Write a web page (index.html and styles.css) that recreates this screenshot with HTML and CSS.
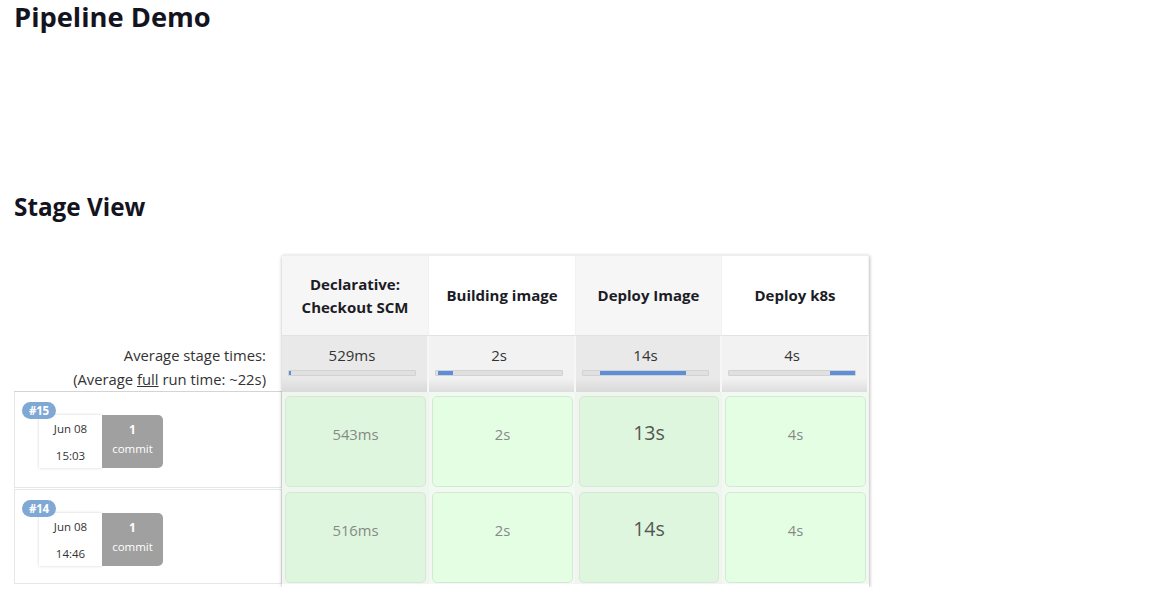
FILE: index.html
```html
<!DOCTYPE html>
<html lang="en">
<head>
<meta charset="utf-8">
<title>Pipeline Demo</title>
<link rel="stylesheet" href="styles.css">
</head>
<body>
<h1 class="title">Pipeline Demo</h1>
<h2 class="subtitle">Stage View</h2>
<div class="stage-view">
  <div class="left">
    <div class="left-head"></div>
    <div class="left-avg">
      <div>Average stage times:</div>
      <div>(Average <u>full</u> run time: ~22s)</div>
    </div>
    <div class="run">
      <span class="badge">#15</span>
      <div class="run-box">
        <div class="date"><span>Jun 08</span><span>15:03</span></div>
        <div class="commits"><b>1</b><span>commit</span></div>
      </div>
    </div>
    <div class="run">
      <span class="badge">#14</span>
      <div class="run-box">
        <div class="date"><span>Jun 08</span><span>14:46</span></div>
        <div class="commits"><b>1</b><span>commit</span></div>
      </div>
    </div>
  </div>
  <div class="stages">
    <div class="head odd">Declarative:<br>Checkout SCM</div>
    <div class="head even">Building image</div>
    <div class="head odd">Deploy Image</div>
    <div class="head even">Deploy k8s</div>

    <div class="avg odd"><div class="avg-time">529ms</div><div class="bar"><span class="gap" style="width:0px"></span><span class="fill" style="width:2px"></span></div></div>
    <div class="avg even"><div class="avg-time">2s</div><div class="bar"><span class="gap" style="width:2px"></span><span class="fill" style="width:15px"></span></div></div>
    <div class="avg odd"><div class="avg-time">14s</div><div class="bar"><span class="gap" style="width:17px"></span><span class="fill" style="width:86px"></span></div></div>
    <div class="avg even"><div class="avg-time">4s</div><div class="bar"><span class="gap" style="width:103px"></span><span class="fill" style="width:26px"></span></div></div>

    <div class="cell odd"><div class="box dark">543ms</div></div>
    <div class="cell even"><div class="box">2s</div></div>
    <div class="cell odd"><div class="box dark big">13s</div></div>
    <div class="cell even"><div class="box">4s</div></div>

    <div class="cell odd"><div class="box dark">516ms</div></div>
    <div class="cell even"><div class="box">2s</div></div>
    <div class="cell odd"><div class="box dark big">14s</div></div>
    <div class="cell even"><div class="box">4s</div></div>
  </div>
</div>
</body>
</html>
```
FILE: styles.css
```css
* { box-sizing: border-box; }
body {
  margin: 0;
  padding: 0 14px;
  font-family: "Open Sans", "Noto Sans", sans-serif;
  color: #333;
  background: #fff;
}
.title {
  margin: 0;
  font-size: 27.3px;
  line-height: 34px;
  font-weight: 700;
  color: #14141f;
}
.subtitle {
  margin: 158px 0 0;
  font-size: 24.3px;
  line-height: 30px;
  font-weight: 700;
  color: #14141f;
}
.stage-view {
  display: flex;
  margin-top: 33px;
}
.left {
  width: 268px;
  display: flex;
  flex-direction: column;
}
.left-head { height: 81px; }
.left-avg {
  height: 56px;
  text-align: right;
  padding: 7px 16px 0 0;
  font-size: 14.8px;
  line-height: 24px;
  color: #333;
  border-bottom: 1px solid #d4d4d4;
}
.left-avg u { text-decoration: underline; }
.run {
  height: 96px;
  border: 1px solid #e6e6e6;
  border-top: none;
  padding: 10px 0 0 7px;
  display: flex;
  flex-direction: column;
  align-items: flex-start;
}
.run + .run { border-top: 1px solid #e6e6e6; margin-top: 1px; height: 95px; }
.badge {
  position: relative;
  z-index: 1;
  background: #80a8d5;
  color: #fff;
  font-size: 11.5px;
  font-weight: 700;
  line-height: 17px;
  padding: 0 7px;
  border-radius: 9px;
  letter-spacing: -0.3px;
}
.run-box {
  display: flex;
  margin: -4px 0 0 17px;
  height: 53px;
}
.date {
  width: 63px;
  background: #fff;
  box-shadow: 0 0 3px rgba(0,0,0,0.18);
  display: flex;
  flex-direction: column;
  align-items: center;
  justify-content: space-between;
  padding: 5px 0 4px;
  font-size: 11.5px;
  line-height: 17px;
  color: #333;
}
.commits {
  width: 61px;
  background: #a0a0a0;
  border-radius: 0 5px 5px 0;
  color: #fff;
  display: flex;
  flex-direction: column;
  align-items: center;
  padding-top: 6px;
  font-size: 11.5px;
  line-height: 17px;
}
.commits b { font-size: 12px; }
.commits span { margin-top: 2px; }
.stages {
  display: grid;
  grid-template-columns: 147px 147px 146px 147px;
  grid-template-rows: 81px 56px 96px 96px;
  box-shadow: 0 2px 4px rgba(0,0,0,0.22), 1px 0 3px rgba(0,0,0,0.12);
  height: 332px;
  align-self: flex-start;
}
.head {
  display: flex;
  align-items: center;
  justify-content: center;
  text-align: center;
  font-size: 15px;
  font-weight: 700;
  line-height: 23px;
  color: #1c1c26;
  border-top: 1px solid #eeeeee;
  border-bottom: 1px solid #e2e2e2;
  border-right: 1px solid #f2f2f2;
}
.head.odd { background: #f6f6f6; }
.head.even { background: #ffffff; }
.avg {
  padding: 8px 11px 0 6px;
  border-right: 2px solid #f7f7f7;
}
.avg.odd { background: linear-gradient(#e9e9e9 0, #e9e9e9 42px, #d9d9d9 56px); }
.avg.even { background: linear-gradient(#f2f2f2 0, #f2f2f2 42px, #dddddd 56px); }
.avg-time {
  text-align: center;
  font-size: 15px;
  line-height: 22px;
  color: #333;
}
.bar {
  margin-top: 4px;
  height: 6px;
  display: flex;
  background: #e0e0e0;
  border: 1px solid #d2d2d2;
  border-radius: 1px;
}
.bar .gap { display: block; }
.bar .fill { display: block; background: #5d8fd8; }
.cell {
  padding: 4px 2px 1px 3px;
  border-right: 1px solid #f2f2f2;
}
.cell.odd { background: #eef6ee; }
.cell.even { background: #f1faf1; }
.box {
  height: 100%;
  border: 1px solid #d8e6d8;
  border-radius: 5px;
  background: #e4fee4;
  text-align: center;
  padding-top: 26px;
  font-size: 14.8px;
  line-height: 22px;
  color: #888;
}
.box.dark { background: #ddf6dd; }
.box.big { font-size: 19.5px; color: #555; padding-top: 25px; }
```
